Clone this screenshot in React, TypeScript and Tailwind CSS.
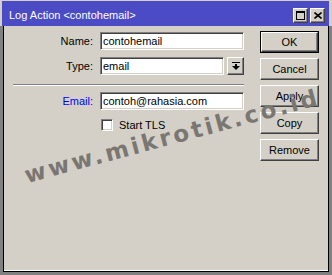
import React from 'react';

// Winbox style "Log Action" dialog
const raised =
  'bg-[#d4d0c8] border border-t-white border-l-white border-r-[#404040] border-b-[#404040] shadow-[inset_-1px_-1px_0_#808080]';
const sunken =
  'bg-white border border-t-[#808080] border-l-[#808080] border-r-white border-b-white shadow-[inset_1px_1px_0_#404040,inset_-1px_-1px_0_#d4d0c8]';

function DropIcon() {
  return (
    <svg width="8" height="8" viewBox="0 0 8 8" fill="#000">
      <rect x="0" y="0" width="8" height="1" />
      <rect x="3" y="2" width="2" height="2" />
      <polygon points="0,4 8,4 4,8" />
    </svg>
  );
}

function TitleButton({ kind }: { kind: 'max' | 'close' }) {
  return (
    <div className={`${raised} w-[15px] h-[15px] flex items-center justify-center`}>
      {kind === 'max' ? (
        <svg width="9" height="9" viewBox="0 0 9 9">
          <rect x="0.5" y="0.5" width="8" height="8" fill="none" stroke="#000" />
          <rect x="0" y="0" width="9" height="2" fill="#000" />
        </svg>
      ) : (
        <svg width="8" height="7" viewBox="0 0 8 7" stroke="#000" strokeWidth="1.6">
          <line x1="0.5" y1="0.5" x2="7.5" y2="6.5" />
          <line x1="7.5" y1="0.5" x2="0.5" y2="6.5" />
        </svg>
      )}
    </div>
  );
}

function Field({ label, value, blue }: { label: string; value: string; blue?: boolean }) {
  return (
    <div className="flex items-center h-[18px]">
      <div className={`w-[89px] text-right ${blue ? 'text-[#0000ff]' : 'text-black'}`}>{label}</div>
      <div className={`${sunken} ml-[7px] w-[144px] h-[18px] flex items-center pl-[2px]`}>{value}</div>
    </div>
  );
}

function Button({ label, primary }: { label: string; primary?: boolean }) {
  if (primary) {
    return (
      <div className="w-[59px] h-[22px] border border-black">
        <div className={`${raised} w-full h-full flex items-center justify-center`}>{label}</div>
      </div>
    );
  }
  return <div className={`${raised} w-[59px] h-[22px] flex items-center justify-center`}>{label}</div>;
}

export default function App() {
  return (
    <div className="relative w-[332px] h-[275px] bg-[#808080] overflow-hidden flex flex-col font-['Liberation_Sans',Arial,sans-serif] text-[11px] text-black">
      {/* title bar */}
      <div className="h-[26px] bg-[#d4d0c8] pt-[1px] pl-[2px] pr-[3px]">
        <div className="h-[25px] bg-[#4b4cc5] flex items-center pl-[7px] pr-[4px] pt-[4px]">
          <div className="flex-1 text-white text-[11px]">Log Action &lt;contohemail&gt;</div>
          <div className="flex gap-[2px]">
            <TitleButton kind="max" />
            <TitleButton kind="close" />
          </div>
        </div>
      </div>

      {/* body */}
      <div className="flex-1 px-[3px] pb-[3px] flex">
        <div className="flex-1 border-l border-r border-b border-black bg-[#d4d0c8] shadow-[inset_0_-1px_0_#ffffff] flex pt-[5px]">
          <div className="flex flex-col pt-[1px]">
            <Field label="Name:" value="contohemail" />
            <div className="flex items-center h-[18px] mt-[7px]">
              <div className="w-[89px] text-right">Type:</div>
              <div className={`${sunken} ml-[7px] w-[124px] h-[18px] flex items-center pl-[2px]`}>email</div>
              <div className={`${raised} ml-[3px] w-[17px] h-[18px] flex items-center justify-center`}>
                <DropIcon />
              </div>
            </div>
            <div className="ml-[9px] mt-[9px] w-[231px] h-[2px] border-t border-t-[#808080] border-b border-b-white" />
            <div className="mt-[6px]">
              <Field label="Email:" value="contoh@rahasia.com" blue />
            </div>
            <div className="flex items-center mt-[7px] ml-[97px]">
              <div className={`${sunken} w-[12px] h-[12px]`} />
              <span className="ml-[6px]">Start TLS</span>
            </div>
          </div>
          <div className="ml-[16px] flex flex-col gap-[5px]">
            <Button label="OK" primary />
            <Button label="Cancel" />
            <Button label="Apply" />
            <Button label="Copy" />
            <Button label="Remove" />
          </div>
        </div>
      </div>

      {/* watermark */}
      <div className="absolute left-[28px] top-[164px] origin-bottom-left -rotate-[15deg] whitespace-nowrap font-['DejaVu_Sans',sans-serif] font-bold text-[23px] leading-none tracking-[3px] text-[#7a7773]">
        www.mikrotik.co.id
      </div>
    </div>
  );
}
